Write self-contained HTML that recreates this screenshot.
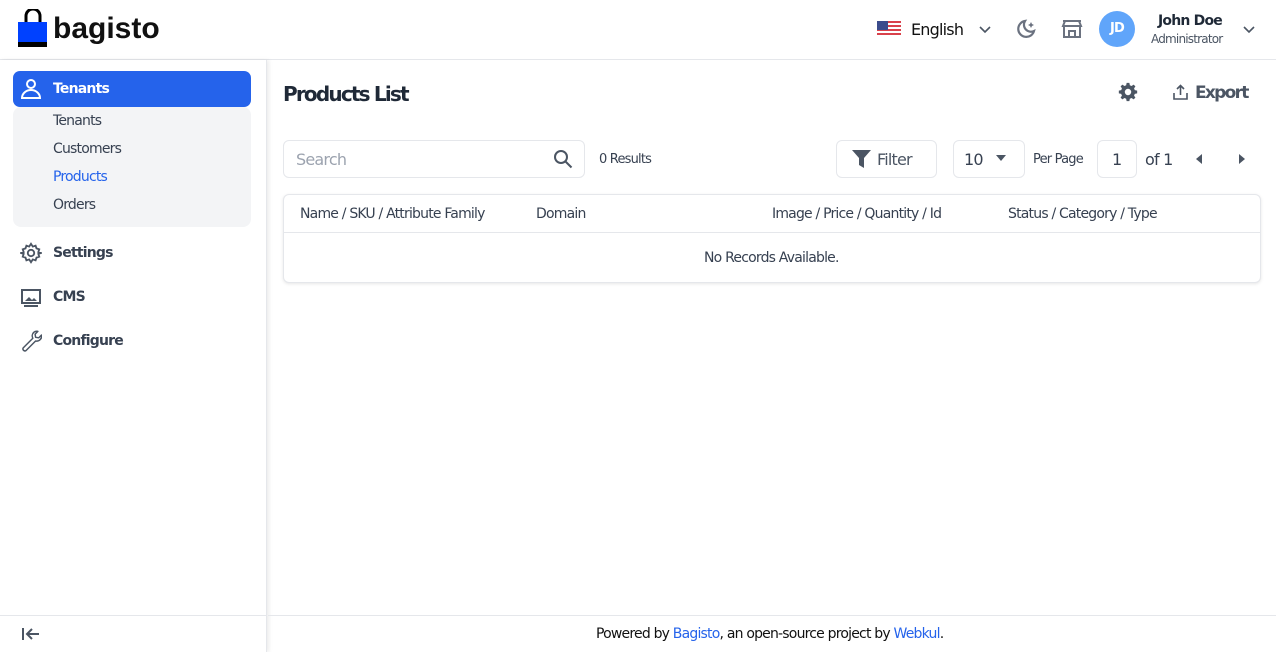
<!DOCTYPE html>
<html><head><meta charset="utf-8"><style>
*{box-sizing:border-box;margin:0;padding:0}
body{width:1276px;height:652px;overflow:hidden;background:#fff;font-family:"DejaVu Sans","Liberation Sans",sans-serif;color:#1f2937;position:relative;letter-spacing:-0.05em}
.hdr{position:absolute;left:0;top:0;width:1276px;height:60px;border-bottom:1px solid #e5e7eb;background:#fff}
.side{position:absolute;left:0;top:60px;width:267px;height:592px;background:#fff;box-shadow:2px 0 4px rgba(0,0,0,.08);border-right:1px solid #e5e7eb}
.t{position:absolute;white-space:nowrap}
.b{font-weight:bold}
.box{position:absolute;border:1px solid #e5e7eb;border-radius:6px;background:#fff}
</style></head><body>
<div class="hdr">
<svg style="position:absolute;left:18px;top:9px" width="30" height="39" viewBox="0 0 30 39"><path d="M8 13V7a7 7 0 0 1 14 0v6" fill="none" stroke="#000" stroke-width="3"/><rect x="0" y="13" width="29" height="20" fill="#0041ff"/><rect x="0" y="33" width="29" height="5" fill="#000"/></svg>
<div class="t b" style="left:53px;top:12px;font-size:30px;color:#111;letter-spacing:0;font-family:'Liberation Sans',sans-serif">bagisto</div>
<svg style="position:absolute;left:877px;top:21px" width="24" height="16" viewBox="0 0 24 16"><rect width="24" height="16" fill="#fff"/><g fill="#d9414b"><rect y="0" width="24" height="2"/><rect y="4" width="24" height="2"/><rect y="8" width="24" height="2"/><rect y="12" width="24" height="2"/></g><rect width="11" height="9" fill="#3b4c8c"/></svg>
<div class="t" style="left:911px;top:20px;font-size:16px;color:#111">English</div>
<svg style="position:absolute;left:978px;top:22px" width="14" height="14" viewBox="0 0 14 14"><path d="M2 5l5 5 5-5" fill="none" stroke="#4b5563" stroke-width="1.6"/></svg>
<svg style="position:absolute;left:1014px;top:17px" width="24" height="24" viewBox="0 0 24 24"><path d="M11 4a8 8 0 1 0 9 10a7 7 0 0 1-9-10z" fill="none" stroke="#6b7280" stroke-width="2.2"/><path d="M17 5l1 2 2 1-2 1-1 2-1-2-2-1 2-1z" fill="#6b7280"/></svg>
<svg style="position:absolute;left:1061px;top:19px" width="22" height="20" viewBox="0 0 22 20"><path d="M2 2h18M2 7h18l-2-5H4zM3 7v11h16V7M8 18v-6h6v6" fill="none" stroke="#6b7280" stroke-width="2"/></svg>
<div style="position:absolute;left:1099px;top:11px;width:36px;height:36px;border-radius:50%;background:#60a5fa;color:#fff;font-size:13px;font-weight:bold;text-align:center;line-height:36px">JD</div>
<div class="t b" style="left:1158px;top:13px;font-size:14px;color:#1f2937">John Doe</div>
<div class="t" style="left:1151px;top:32px;font-size:12px;color:#4b5563">Administrator</div>
<svg style="position:absolute;left:1242px;top:22px" width="14" height="14" viewBox="0 0 14 14"><path d="M2 5l5 5 5-5" fill="none" stroke="#4b5563" stroke-width="1.6"/></svg>
</div>
<div class="side">
<div style="position:absolute;left:13px;top:47px;width:238px;height:120px;background:#f3f4f6;border-radius:8px"></div>
<div style="position:absolute;left:13px;top:11px;width:238px;height:36px;background:#2563eb;border-radius:7px"></div>
<svg style="position:absolute;left:20px;top:18px" width="22" height="22" viewBox="0 0 22 22"><circle cx="11" cy="6" r="4" fill="none" stroke="#fff" stroke-width="2"/><path d="M2 20a9 8 0 0 1 18 0z" fill="none" stroke="#fff" stroke-width="2"/></svg>
<div class="t b" style="left:53px;top:21px;font-size:14px;color:#fff">Tenants</div>
<div class="t" style="left:53px;top:53px;font-size:14px;color:#374151">Tenants</div>
<div class="t" style="left:53px;top:81px;font-size:14px;color:#374151">Customers</div>
<div class="t" style="left:53px;top:109px;font-size:14px;color:#2563eb">Products</div>
<div class="t" style="left:53px;top:137px;font-size:14px;color:#374151">Orders</div>
<svg style="position:absolute;left:20px;top:182px" width="22" height="22" viewBox="0 0 24 24"><path d="M12 2l2 3 3-1 1 3 3 1-1 3 3 1-3 1 1 3-3 1-1 3-3-1-2 3-2-3-3 1-1-3-3-1 1-3-3-1 3-1-1-3 3-1 1-3 3 1z" fill="none" stroke="#4b5563" stroke-width="2"/><circle cx="12" cy="12" r="3.5" fill="none" stroke="#4b5563" stroke-width="2"/></svg>
<div class="t b" style="left:53px;top:185px;font-size:14px;color:#374151">Settings</div>
<svg style="position:absolute;left:20px;top:227px" width="22" height="22" viewBox="0 0 22 22"><rect x="2" y="3" width="18" height="13" fill="none" stroke="#4b5563" stroke-width="2"/><path d="M5 14l4-4 3 3 2-2 3 3z" fill="#4b5563"/><path d="M4 19h14" stroke="#4b5563" stroke-width="2"/></svg>
<div class="t b" style="left:53px;top:229px;font-size:14px;color:#374151">CMS</div>
<svg style="position:absolute;left:20px;top:270px" width="22" height="22" viewBox="0 0 24 24"><path d="M15 2.5a5.5 5.5 0 0 0-1 6.5L3.5 19.5a2.2 2.2 0 0 0 3 3L17 12a5.5 5.5 0 0 0 6.5-6.5l-3 3-3.5-.5-.5-3.5 3-3a5.5 5.5 0 0 0-4.5 1z" fill="none" stroke="#4b5563" stroke-width="1.6" stroke-linejoin="round"/></svg>
<div class="t b" style="left:53px;top:273px;font-size:14px;color:#374151">Configure</div>
<div style="position:absolute;left:0;top:555px;width:267px;border-top:1px solid #e5e7eb"></div>
<svg style="position:absolute;left:21px;top:566px" width="20" height="16" viewBox="0 0 20 16"><path d="M2 2v12M18 8H6M11 3L6 8l5 5" fill="none" stroke="#4b5563" stroke-width="2"/></svg>
</div>
<div style="position:absolute;left:268px;top:615px;width:1008px;border-top:1px solid #e5e7eb"></div>
<div class="t" style="left:596px;top:626px;font-size:14px;color:#111">Powered by <span style="color:#2563eb">Bagisto</span>, an open-source project by <span style="color:#2563eb">Webkul</span>.</div>
<div class="t b" style="left:283px;top:82px;font-size:20px;color:#1f2937;letter-spacing:-0.09em">Products List</div>
<svg style="position:absolute;left:1117px;top:81px" width="22" height="22" viewBox="0 0 24 24"><path fill="#4b5563" d="M13.5 2l.5 2.6 1.9.8 2.2-1.5 2 2-1.5 2.2.8 1.9 2.6.5v3l-2.6.5-.8 1.9 1.5 2.2-2 2-2.2-1.5-1.9.8-.5 2.6h-3l-.5-2.6-1.9-.8-2.2 1.5-2-2 1.5-2.2-.8-1.9L2 13.5v-3l2.6-.5.8-1.9L3.9 5.9l2-2 2.2 1.5 1.9-.8.5-2.6zM12 8.5a3.5 3.5 0 1 0 0 7 3.5 3.5 0 0 0 0-7z"/></svg>
<svg style="position:absolute;left:1172px;top:84px" width="17" height="17" viewBox="0 0 17 17"><path d="M8.5 11V2M5 5l3.5-3.5L12 5M2 9v6h13V9" fill="none" stroke="#4b5563" stroke-width="1.6"/></svg>
<div class="t b" style="left:1195px;top:83px;font-size:17px;color:#4b5563;letter-spacing:-0.1em">Export</div>
<div class="box" style="left:283px;top:140px;width:302px;height:38px"></div>
<div class="t" style="left:296px;top:150px;font-size:16px;color:#9ca3af">Search</div>
<svg style="position:absolute;left:553px;top:149px" width="20" height="20" viewBox="0 0 20 20"><circle cx="8" cy="8" r="6" fill="none" stroke="#4b5563" stroke-width="2"/><path d="M12.5 12.5l6 6" stroke="#4b5563" stroke-width="2"/></svg>
<div class="t" style="left:599px;top:152px;font-size:13px;color:#374151">0 Results</div>
<div class="box" style="left:836px;top:140px;width:101px;height:38px"></div>
<svg style="position:absolute;left:852px;top:150px" width="19" height="18" viewBox="0 0 19 18"><path d="M0 0h19l-7 8v10l-5-3V8z" fill="#4b5563"/></svg>
<div class="t" style="left:877px;top:150px;font-size:16px;color:#4b5563">Filter</div>
<div class="box" style="left:953px;top:140px;width:72px;height:38px"></div>
<div class="t" style="left:964px;top:150px;font-size:16px;color:#374151">10</div>
<svg style="position:absolute;left:996px;top:155px" width="10" height="7" viewBox="0 0 10 7"><path d="M0 0h10L5 6z" fill="#4b5563"/></svg>
<div class="t" style="left:1033px;top:152px;font-size:13px;color:#374151">Per Page</div>
<div class="box" style="left:1097px;top:140px;width:40px;height:38px"></div>
<div class="t" style="left:1112px;top:150px;font-size:16px;color:#374151">1</div>
<div class="t" style="left:1145px;top:150px;font-size:16px;color:#374151">of 1</div>
<svg style="position:absolute;left:1196px;top:154px" width="6" height="10" viewBox="0 0 6 10"><path d="M6 0v10L0 5z" fill="#4b5563"/></svg>
<svg style="position:absolute;left:1239px;top:154px" width="6" height="10" viewBox="0 0 6 10"><path d="M0 0v10l6-5z" fill="#4b5563"/></svg>
<div class="box" style="left:283px;top:194px;width:978px;height:89px;box-shadow:0 1px 3px rgba(0,0,0,.1)"></div>
<div style="position:absolute;left:284px;top:232px;width:976px;border-top:1px solid #e5e7eb"></div>
<div class="t" style="left:300px;top:206px;font-size:14px;color:#374151">Name / SKU / Attribute Family</div>
<div class="t" style="left:536px;top:206px;font-size:14px;color:#374151">Domain</div>
<div class="t" style="left:772px;top:206px;font-size:14px;color:#374151">Image / Price / Quantity / Id</div>
<div class="t" style="left:1008px;top:206px;font-size:14px;color:#374151">Status / Category / Type</div>
<div class="t" style="left:704px;top:250px;font-size:14px;color:#374151">No Records Available.</div>
</body></html>
